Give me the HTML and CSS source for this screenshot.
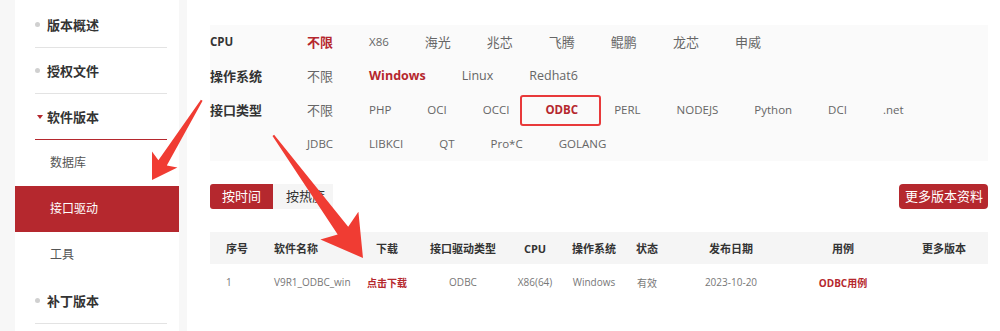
FILE: index.html
```html
<!DOCTYPE html>
<html lang="zh-CN">
<head>
<meta charset="UTF-8">
<meta name="viewport" content="width=device-width, initial-scale=1.0">
<title>软件版本 - 接口驱动</title>
<link rel="stylesheet" href="styles.css">
</head>
<body>

<div class="page">
    <aside class="sidebar">
        <ul class="side-nav">
            <li class="nav-item"><span class="dot"></span>版本概述</li>
            <li class="nav-item"><span class="dot"></span>授权文件</li>
            <li class="nav-item open"><span class="caret"></span>软件版本</li>
            <li class="sub-item">数据库</li>
            <li class="sub-item active">接口驱动</li>
            <li class="sub-item">工具</li>
            <li class="nav-item"><span class="dot"></span>补丁版本</li>
        </ul>
    </aside>

    <main class="content">
        <div class="filter">
            <div class="filter-row">
                <div class="filter-label en">CPU</div>
                <div class="filter-opts">
                    <span class="opt on">不限</span>
                    <span class="opt en">X86</span>
                    <span class="opt">海光</span>
                    <span class="opt">兆芯</span>
                    <span class="opt">飞腾</span>
                    <span class="opt">鲲鹏</span>
                    <span class="opt">龙芯</span>
                    <span class="opt">申威</span>
                </div>
            </div>
            <div class="filter-row os-row">
                <div class="filter-label">操作系统</div>
                <div class="filter-opts">
                    <span class="opt">不限</span>
                    <span class="opt en on">Windows</span>
                    <span class="opt en">Linux</span>
                    <span class="opt en">Redhat6</span>
                </div>
            </div>
            <div class="filter-row">
                <div class="filter-label">接口类型</div>
                <div class="filter-opts">
                    <span class="opt">不限</span>
                    <span class="opt en">PHP</span>
                    <span class="opt en">OCI</span>
                    <span class="opt en">OCCI</span>
                    <span class="opt en on marked">ODBC</span>
                    <span class="opt en">PERL</span>
                    <span class="opt en">NODEJS</span>
                    <span class="opt en">Python</span>
                    <span class="opt en">DCI</span>
                    <span class="opt en">.net</span>
                    <span class="opt en">JDBC</span>
                    <span class="opt en">LIBKCI</span>
                    <span class="opt en">QT</span>
                    <span class="opt en">Pro*C</span>
                    <span class="opt en">GOLANG</span>
                </div>
            </div>
        </div>

        <div class="toolbar">
            <div class="tabs">
                <span class="tab on">按时间</span>
                <span class="tab">按热度</span>
            </div>
            <a class="more-btn" href="#">更多版本资料</a>
        </div>

        <table class="list">
            <thead>
                <tr>
                    <th class="c-no">序号</th>
                    <th class="c-name">软件名称</th>
                    <th class="c-dl">下载</th>
                    <th class="c-type">接口驱动类型</th>
                    <th class="c-cpu">CPU</th>
                    <th class="c-os">操作系统</th>
                    <th class="c-state">状态</th>
                    <th class="c-date">发布日期</th>
                    <th class="c-demo">用例</th>
                    <th class="c-more">更多版本</th>
                </tr>
            </thead>
            <tbody>
                <tr>
                    <td class="c-no">1</td>
                    <td class="c-name">V9R1_ODBC_win</td>
                    <td><a class="link" href="#">点击下载</a></td>
                    <td>ODBC</td>
                    <td>X86(64)</td>
                    <td>Windows</td>
                    <td>有效</td>
                    <td>2023-10-20</td>
                    <td><a class="link" href="#">ODBC用例</a></td>
                    <td></td>
                </tr>
            </tbody>
        </table>
    </main>

    <!-- annotation arrows -->
    <svg class="marks" width="1000" height="331" viewBox="0 0 1000 331">
        <polygon points="152,180 177.4,167.6 166.8,165.6 202.6,100.8 200.9,99.8 158.4,160.3 152,151.6" />
        <polygon points="363,258 358.4,211.8 348.2,226.7 274.1,134.7 272.5,135.9 337.7,234.4 320.4,239.6" />
    </svg>
</div>

</body>
</html>
```

FILE: styles.css
```css
* {
  box-sizing: border-box;
}

body {
  margin: 0;
  font-family: "Open Sans", "Noto Sans CJK SC", sans-serif;
  background-color: #f7f7f7;
  color: #333;
  overflow: hidden;
}

a {
  text-decoration: none;
}

.page {
  position: relative;
  display: flex;
  gap: 8px;
  height: 331px;
  padding-left: 15px;
}

/* sidebar */
.sidebar {
  width: 164px;
  flex-shrink: 0;
  background-color: #fff;
  padding-top: 2px;
}

.side-nav {
  list-style: none;
  margin: 0;
  padding: 0;
}

.nav-item {
  display: flex;
  align-items: center;
  height: 46px;
  margin: 0 12px 0 20px;
  border-bottom: 1px solid #e3e3e3;
  font-size: 13px;
  font-weight: bold;
  color: #333;
}

.nav-item.open {
  border-bottom-color: #b5282e;
}

.dot {
  width: 5px;
  height: 5px;
  border-radius: 50%;
  background-color: #d0d0d0;
  margin-right: 7px;
}

.caret {
  width: 0;
  height: 0;
  margin: 0 4px 0 2px;
  border-left: 3px solid transparent;
  border-right: 3px solid transparent;
  border-top: 4px solid #b5282e;
}

.sub-item {
  height: 46px;
  line-height: 46px;
  padding-left: 35px;
  font-size: 12px;
  color: #555;
}

.sub-item.active {
  background-color: #b5282e;
  color: #fff;
}

/* main */
.content {
  flex: 1;
  background-color: #fff;
  padding: 25px 12px 0 23px;
}

.filter {
  background-color: #fafafa;
}

.filter-row {
  display: flex;
}

.filter-label {
  width: 79px;
  flex-shrink: 0;
  line-height: 34px;
  font-size: 13px;
  font-weight: bold;
}

.filter-opts {
  display: flex;
  flex-wrap: wrap;
  width: 650px;
}

.opt {
  position: relative;
  padding: 0 18px;
  line-height: 34px;
  font-size: 13px;
  color: #666;
}

/* latin labels sit a bit smaller next to the chinese ones */
.filter .en {
  font-size: 11.5px;
}

.filter .os-row .en {
  font-size: 12.5px;
}

.opt.on {
  color: #b5282e;
  font-weight: bold;
}

.opt.marked::after {
  content: "";
  position: absolute;
  top: 2px;
  bottom: 1px;
  left: -7px;
  right: -5px;
  border: 2px solid #e8393a;
  border-radius: 3px;
}

.toolbar {
  display: flex;
  justify-content: space-between;
  margin-top: 23px;
}

.tabs {
  display: flex;
}

.tab {
  height: 25px;
  line-height: 25px;
  padding: 0 8px 0 13px;
  font-size: 13px;
  color: #333;
  background-color: #f5f5f5;
}

.tab.on {
  padding: 0 12px;
  color: #fff;
  background-color: #b5282e;
  border-radius: 3px 0 0 3px;
}

.more-btn {
  height: 25px;
  line-height: 25px;
  padding: 0 5px 0 6px;
  font-size: 13px;
  color: #fff;
  background-color: #b5282e;
  border-radius: 4px;
}

.list {
  width: 100%;
  margin-top: 23px;
  border-collapse: collapse;
  table-layout: fixed;
}

.list th {
  height: 32px;
  padding: 0;
  background-color: #f5f5f5;
  font-size: 11px;
  font-weight: bold;
  color: #333;
  white-space: nowrap;
}

.list td {
  height: 36px;
  padding: 0;
  text-align: center;
  font-size: 10px;
  color: #777;
  white-space: nowrap;
}

.list .c-no,
.list .c-name {
  text-align: left;
  padding-left: 16px;
}

.c-no { width: 48px; }
.c-name { width: 90px; }
.c-dl { width: 78px; }
.c-type { width: 74px; }
.c-cpu { width: 70px; }
.c-os { width: 48px; }
.c-state { width: 58px; }
.c-date { width: 110px; }
.c-demo { width: 114px; }
.c-more { width: 88px; }

.link {
  color: #b5282e;
  font-weight: bold;
}

.marks {
  position: absolute;
  top: 0;
  left: 0;
  pointer-events: none;
}

.marks polygon {
  fill: #f03c33;
}
```
